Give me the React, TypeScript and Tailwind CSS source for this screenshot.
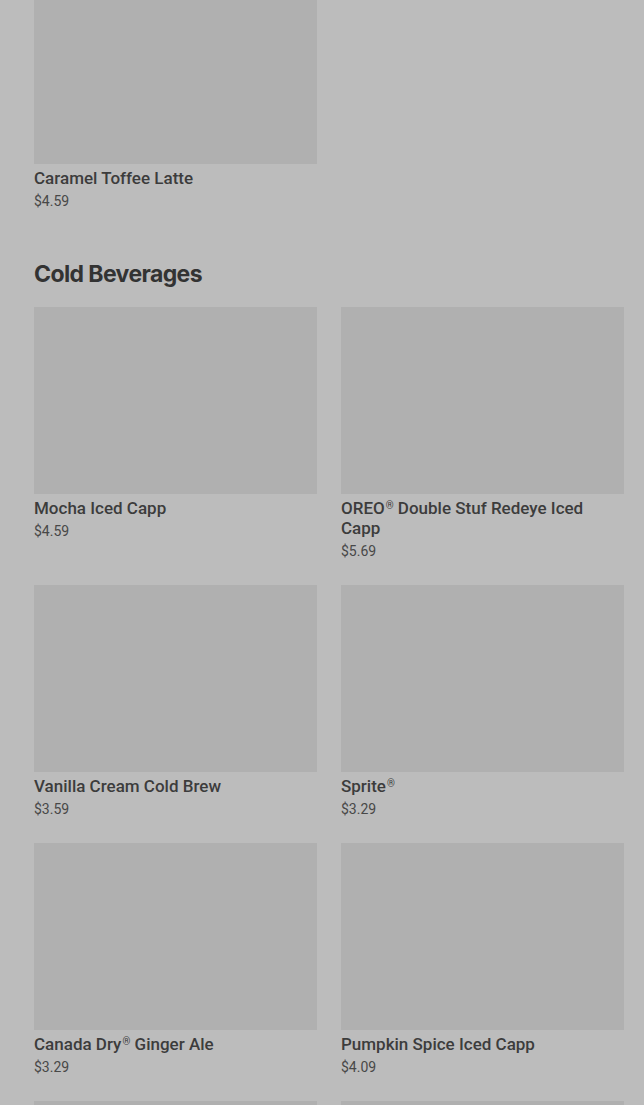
import React from "react";

type Item = { name: string; price: string };

function Name({ text }: { text: string }) {
  const parts = text.split("®");
  return (
    <>
      {parts.map((p, i) => (
        <React.Fragment key={i}>
          {p}
          {i < parts.length - 1 && (
            <span className="relative top-[-5px] ml-px inline-block text-[10px] leading-none">®</span>
          )}
        </React.Fragment>
      ))}
    </>
  );
}

function Card({ item }: { item: Item }) {
  return (
    <div className="flex flex-col">
      <div className="h-[187px] w-full bg-[#b0b0b0]" />
      <div className="mt-1 text-[17px] leading-5 font-medium text-[#3c3c3c]">
        <Name text={item.name} />
      </div>
      <div className="mt-[3px] text-[14px] leading-5 text-[#484848]">{item.price}</div>
    </div>
  );
}

export default function App() {
  const hot: Item[] = [{ name: "Caramel Toffee Latte", price: "$4.59" }];
  const cold: Item[] = [
    { name: "Mocha Iced Capp", price: "$4.59" },
    { name: "OREO® Double Stuf Redeye Iced Capp", price: "$5.69" },
    { name: "Vanilla Cream Cold Brew", price: "$3.59" },
    { name: "Sprite®", price: "$3.29" },
    { name: "Canada Dry® Ginger Ale", price: "$3.29" },
    { name: "Pumpkin Spice Iced Capp", price: "$4.09" },
  ];
  return (
    <div
      className="h-[1105px] w-[644px] overflow-hidden bg-[#bcbcbc]"
      style={{ fontFamily: "Roboto, 'Liberation Sans', sans-serif" }}
    >
      <div className="mt-[-23px] pl-[34px] pr-[20px]">
        <div className="grid grid-cols-2 gap-x-6 gap-y-6">
          {hot.map((it) => (
            <Card key={it.name} item={it} />
          ))}
        </div>
        <h2
          className="mt-[49px] mb-[19px] text-[23px] leading-7 font-bold tracking-[-0.6px] text-[#333333]"
          style={{ fontFamily: "Inter, 'Liberation Sans', sans-serif" }}
        >
          Cold Beverages
        </h2>
        <div className="grid grid-cols-2 gap-x-6 gap-y-6">
          {cold.map((it) => (
            <Card key={it.name} item={it} />
          ))}
          <div className="h-[187px] w-full bg-[#b0b0b0]" />
          <div className="h-[187px] w-full bg-[#b0b0b0]" />
        </div>
      </div>
    </div>
  );
}
